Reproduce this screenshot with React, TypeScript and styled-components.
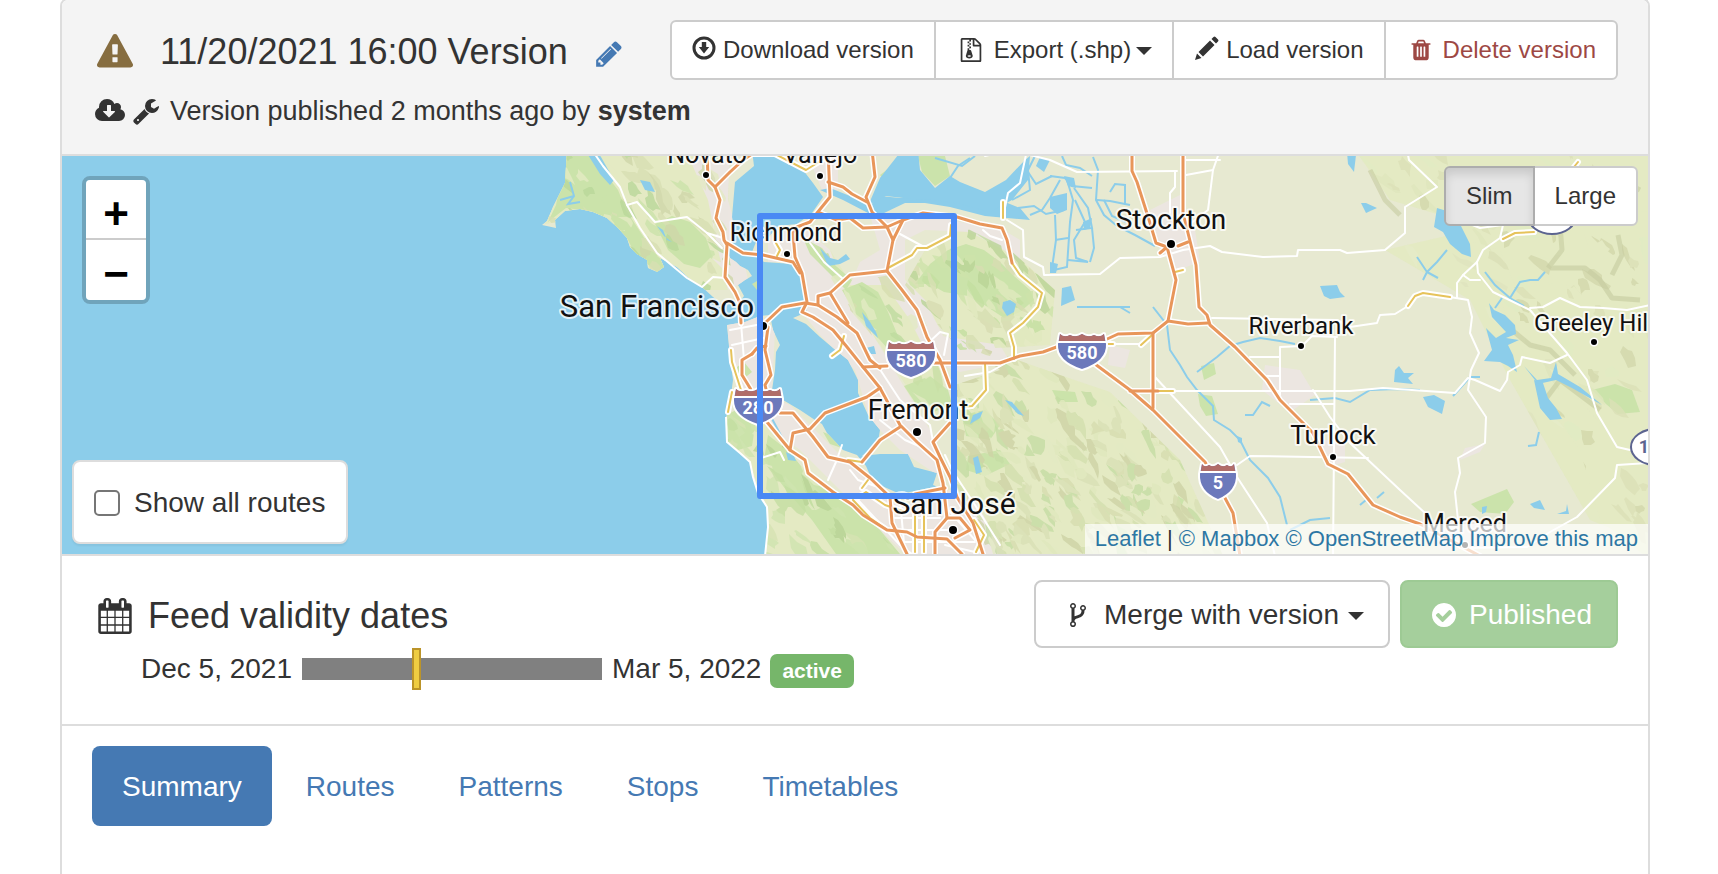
import React, { useState } from 'react';
import styled, { createGlobalStyle, css } from 'styled-components';

const color = {
  text: '#333333',
  link: '#4579b3',
  danger: '#9d4844',
  warning: '#866d40',
  success: '#76b66a',
  border: '#dddddd',
  control: '#cccccc',
  water: '#8ccdea',
  land: '#e7e9d1',
  hill: '#e4eac4',
  urban: '#ece6e1',
  wood: '#cbe3ab',
  motorway: '#e8965a',
  trunk: '#e6c35b',
};

const GlobalStyle = createGlobalStyle`
  *, *::before, *::after { box-sizing: border-box; }
  body {
    margin: 0;
    background: #ffffff;
    color: ${color.text};
    font-family: "Liberation Sans", Helvetica, Arial, sans-serif;
    font-size: 28px;
    line-height: 40px;
  }
`;

/* ---------- icons ---------- */

type IconName =
  | 'warning' | 'pencil' | 'cloud' | 'wrench' | 'archive'
  | 'trash' | 'calendar' | 'fork' | 'check';

const iconPaths: Record<IconName, string> = {
  warning:
    'M1024 1375v-190q0-14-9.5-23.5t-22.5-9.5h-192q-13 0-22.5 9.5t-9.5 23.5v190q0 14 9.5 23.5t22.5 9.5h192q13 0 22.5-9.5t9.5-23.5zm-2-374l18-459q0-12-10-19-13-11-24-11h-220q-11 0-24 11-10 7-10 21l17 457q0 10 10 16.5t24 6.5h185q14 0 23.5-6.5t10.5-16.5zm-14-934l768 1408q35 63-2 126-17 29-46.5 46t-63.5 17h-1536q-34 0-63.5-17t-46.5-46q-37-63-2-126l768-1408q17-31 47-49t65-18 65 18 47 49z',
  pencil:
    'M491 1536l91-91-235-235-91 91v107h128v128h107zm523-928q0-22-22-22-10 0-17 7l-542 542q-7 7-7 17 0 22 22 22 10 0 17-7l542-542q7-7 7-17zm-54-192l416 416-832 832h-416v-416zm683 96q0 53-37 90l-166 166-416-416 166-165q36-38 90-38 53 0 91 38l235 234q37 39 37 91z',
  cloud:
    'M1216 928q0-14-9-23t-23-9h-224v-352q0-13-9.5-22.5t-22.5-9.5h-192q-13 0-22.5 9.5t-9.5 22.5v352h-224q-13 0-22.5 9.5t-9.5 22.5q0 14 9 23l352 352q9 9 23 9t23-9l351-351q10-12 10-24zm640 224q0 159-112.5 271.5t-271.5 112.5h-1088q-185 0-316.5-131.5t-131.5-316.5q0-130 70-240t188-165q-2-30-2-43 0-212 150-362t362-150q156 0 285.5 87t188.5 231q71-62 166-62 106 0 181 75t75 181q0 76-41 138 130 31 213.5 135.5t83.5 238.5z',
  wrench:
    'M448 1472q0-26-19-45t-45-19-45 19-19 45 19 45 45 19 45-19 19-45zm644-420l-682 682q-37 37-90 37-52 0-91-37l-106-108q-38-36-38-90 0-53 38-91l681-681q39 98 114.5 173.5t173.5 114.5zm634-435q0 39-23 106-47 134-164.5 217.5t-258.5 83.5q-185 0-316.5-131.5t-131.5-316.5 131.5-316.5 316.5-131.5q58 0 121.5 16.5t107.5 46.5q16 11 16 28t-16 28l-293 169v224l193 107q5-3 79-48.5t135.5-81 70.5-35.5q15 0 23.5 10t8.5 25z',
  archive:
    'M768 384v-128h-128v128h128zm128 128v-128h-128v128h128zm-128 128v-128h-128v128h128zm128 128v-128h-128v128h128zm700-388q28 28 48 76t20 88v1152q0 40-28 68t-68 28h-1344q-40 0-68-28t-28-68v-1600q0-40 28-68t68-28h896q40 0 88 20t76 48zm-444-244v376h376q-10-29-22-41l-313-313q-12-12-41-22zm384 1528v-1024h-416q-40 0-68-28t-28-68v-416h-128v128h-128v-128h-512v1536h1280zm-627-721l107 349q8 27 8 52 0 83-72.5 137.5t-183.5 54.5-183.5-54.5-72.5-137.5q0-25 8-52 21-63 120-396v-128h128v128h79q22 0 39 13t23 34zm-141 465q53 0 90.5-19t37.5-45-37.5-45-90.5-19-90.5 19-37.5 45 37.5 45 90.5 19z',
  trash:
    'M704 1376v-704q0-14-9-23t-23-9h-64q-14 0-23 9t-9 23v704q0 14 9 23t23 9h64q14 0 23-9t9-23zm256 0v-704q0-14-9-23t-23-9h-64q-14 0-23 9t-9 23v704q0 14 9 23t23 9h64q14 0 23-9t9-23zm256 0v-704q0-14-9-23t-23-9h-64q-14 0-23 9t-9 23v704q0 14 9 23t23 9h64q14 0 23-9t9-23zm-544-992h448l-48-117q-7-9-17-11h-317q-10 2-17 11zm928 32v64q0 14-9 23t-23 9h-96v948q0 83-47 143.5t-113 60.5h-832q-66 0-113-58.5t-47-141.5v-952h-96q-14 0-23-9t-9-23v-64q0-14 9-23t23-9h309l70-167q15-37 54-63t79-26h320q40 0 79 26t54 63l70 167h309q14 0 23 9t9 23z',
  calendar:
    'M192 1664h288v-288h-288v288zm352 0h320v-288h-320v288zm-352-352h288v-320h-288v320zm352 0h320v-320h-320v320zm-352-384h288v-288h-288v288zm736 736h320v-288h-320v288zm-384-736h320v-288h-320v288zm768 736h288v-288h-288v288zm-384-352h320v-320h-320v320zm-352-864v-288q0-13-9.5-22.5t-22.5-9.5h-64q-13 0-22.5 9.5t-9.5 22.5v288q0 13 9.5 22.5t22.5 9.5h64q13 0 22.5-9.5t9.5-22.5zm736 864h288v-320h-288v320zm-384-384h320v-288h-320v288zm384 0h288v-288h-288v288zm32-480v-288q0-13-9.5-22.5t-22.5-9.5h-64q-13 0-22.5 9.5t-9.5 22.5v288q0 13 9.5 22.5t22.5 9.5h64q13 0 22.5-9.5t9.5-22.5zm384-64v1280q0 52-38 90t-90 38h-1408q-52 0-90-38t-38-90v-1280q0-52 38-90t90-38h128v-96q0-66 47-113t113-47h64q66 0 113 47t47 113v96h384v-96q0-66 47-113t113-47h64q66 0 113 47t47 113v96h128q52 0 90 38t38 90z',
  fork:
    'M672 1472q0-40-28-68t-68-28-68 28-28 68 28 68 68 28 68-28 28-68zm0-1152q0-40-28-68t-68-28-68 28-28 68 28 68 68 28 68-28 28-68zm640 128q0-40-28-68t-68-28-68 28-28 68 28 68 68 28 68-28 28-68zm96 0q0 52-26 96.5t-70 69.5q-2 287-226 414-67 38-203 81-128 40-169.5 71t-41.5 100v26q44 25 70 69.5t26 96.5q0 80-56 136t-136 56-136-56-56-136q0-52 26-96.5t70-69.5v-820q-44-25-70-69.5t-26-96.5q0-80 56-136t136-56 136 56 56 136q0 52-26 96.5t-70 69.5v497q54-26 154-57 55-17 87.5-29.5t70.5-31 59-39.5 40.5-51 28-69.5 8.5-91.5q-44-25-70-69.5t-26-96.5q0-80 56-136t136-56 136 56 56 136z',
  check:
    'M1412 734q0-28-18-46l-91-90q-19-19-45-19t-45 19l-408 407-226-226q-19-19-45-19t-45 19l-91 90q-18 18-18 46 0 27 18 45l362 362q19 19 45 19 27 0 46-19l543-543q18-18 18-45zm252 162q0 209-103 385.5t-279.5 279.5-385.5 103-385.5-103-279.5-279.5-103-385.5 103-385.5 279.5-279.5 385.5-103 385.5 103 279.5 279.5 103 385.5z',
};

const Svg = styled.svg`
  display: block;
  flex: none;
  fill: currentColor;
`;

const RaisedSvg = styled(Svg)`
  margin-bottom: 4px;
`;

function Icon({ name, size, width = size }: { name: IconName; size: number; width?: number }) {
  const box = name === 'cloud' ? '-64 0 1920 1792' : '0 0 1792 1792';
  return (
    <Svg width={width} height={size} viewBox={box} aria-hidden="true">
      <path d={iconPaths[name]} />
    </Svg>
  );
}

function DownloadIcon() {
  return (
    <RaisedSvg width="24" height="24" viewBox="0 0 24 24" aria-hidden="true">
      <circle cx="12" cy="12" r="10" fill="none" stroke="currentColor" strokeWidth="3" />
      <path d="M9.8 6h4.4v5h3L12 17.500l-5.200-6.500h3z" />
    </RaisedSvg>
  );
}

function SolidPencilIcon() {
  return (
    <RaisedSvg width="25" height="24" viewBox="0 0 25 24" aria-hidden="true">
      <path d="M1 24l2-6.500 4.500 4.500zM4.500 16L16 4.500l4.500 4.500L9 20.500zM17.500 3l2-2q1-1 2 0l2.500 2.500q1 1 0 2l-2 2z" />
    </RaisedSvg>
  );
}

/* ---------- map drawing ---------- */

type Points = string;

const marinCoast: Points =
  '567,150 565,183 553,207 547,221 542,225 556,228 555,220 565,211 580,209 593,212 607,218 618,228 627,238 630,247 637,254 647,260 648,268 657,272 664,267 660,258 677,267 690,279 702,287 713,297 722,304 738,304 744,296 738,285 745,280 752,276 748,270 740,266 736,262 730,258 725,247 735,240 732,217 735,182 754,166 752,150';

const peninsula: Points =
  '727,325 745,322 760,316 770,315 773,330 780,345 776,352 775,370 772,390 783,400 800,410 815,420 822,424 827,433 843,450 857,455 866,466 873,482 900,494 945,485 960,480 1000,560 765,560 768,527 767,507 758,493 753,477 750,462 740,453 727,442 726,417 729,410 733,380 730,357';

const eastShore: Points =
  '777,150 803,170 813,183 823,197 812,213 797,224 778,226 768,238 756,242 752,252 764,262 793,264 800,275 805,300 807,312 793,318 806,324 820,337 833,348 848,360 858,380 858,393 868,415 880,430 878,442 862,456 880,454 908,454 914,467 937,473 933,485 945,490 990,560 1650,560 1650,150';

const waters: Points[] = [
  '820,190 843,200 868,213 882,214 905,203 925,203 950,207 985,216 1030,220 1020,208 1000,200 978,205 950,196 920,196 900,198 880,196 872,204 850,196 830,188',
  '902,150 918,150 920,170 935,188 950,176 960,182 985,192 1006,180 1025,160 1030,156 1028,180 1012,200 990,212 960,204 935,200 912,199 886,196 868,206 880,178',
  '585,150 597,150 614,180 610,185 600,174',
  '1050,197 1067,193 1067,210 1057,214 1050,208',
  '1062,288 1071,286 1075,300 1061,306',
  '1040,157 1050,160 1044,172 1036,166',
  '1437,208 1450,212 1460,224 1470,244 1471,257 1462,254 1450,244 1443,232 1434,227',
  '1489,303 1494,310 1505,315 1515,325 1516,334 1506,338 1519,340 1508,345 1513,355 1517,372 1508,366 1500,362 1484,361 1492,350 1486,328 1496,338 1506,332 1492,317',
  '1534,380 1543,383 1548,398 1556,408 1562,419 1550,420 1540,408',
  '1524,366 1537,380 1551,378 1556,362 1558,374 1580,387 1602,405 1572,388 1556,380 1538,384',
  '1395,370 1399,366 1404,373 1414,373 1408,378 1413,384 1394,382',
  '1423,397 1434,395 1445,401 1442,414 1428,407',
  '1320,286 1337,285 1340,292 1345,297 1330,299 1324,296',
  '1361,203 1366,203 1377,208 1366,213',
  '1347,152 1356,155 1354,172 1348,164',
  '1530,504 1540,500 1545,510 1534,508',
  '1557,514 1566,511 1567,504 1569,514',
  '1482,507 1487,506 1486,512 1482,514',
  '820,248 830,258 838,260 846,254 850,259 840,264 828,266',
  '862,312 870,322 876,332 878,338 866,326',
  '866,348 874,346 876,354 868,354',
  '1003,302 1010,300 1016,304 1014,312 1007,316 1002,308',
  '1005,400 1012,402 1024,416 1018,414',
  '973,415 983,411 980,418 970,424',
  '973,458 978,456 982,472 976,474',
  '640,180 650,182 655,192 645,190',
  '657,226 663,230 667,240 672,242 664,236',
  '786,452 794,456 796,461 788,460',
  '1237,436 1242,438 1242,444 1238,442',
  '1050,262 1058,264 1056,273 1050,273',
  '1083,222 1092,218 1090,228 1084,230',
  '1064,176 1074,178 1076,188 1068,186',
];

const channels: Points[] = [
  '1093,157 1098,170 1096,200 1104,215 1117,226 1135,235 1155,246',
  '1067,180 1073,200 1070,222 1067,267 1054,270',
  '1050,176 1065,178 1072,186 1092,188',
  '1075,200 1085,222 1074,240 1076,258 1088,262 1068,260',
  '1074,188 1088,208 1092,228 1076,230',
  '1097,200 1110,201 1130,205',
  '1125,205 1125,185 1115,184 1110,192',
  '1062,156 1066,165 1080,168 1092,176',
  '1012,200 1030,190 1028,170 1035,156',
  '1030,215 1042,210 1050,198 1060,180',
  '1018,208 1034,206 1046,214 1064,210',
  '1028,172 1036,184 1052,176',
  '1055,215 1056,240 1052,268',
  '1055,240 1068,238',
  '1092,228 1094,248 1090,262',
  '1104,200 1112,216 1126,222',
  '950,178 958,166 970,158',
  '935,158 962,166 975,156',
  '1077,307 1130,307',
  '1120,307 1130,313',
  '1153,307 1167,325 1170,350 1180,365 1187,377 1197,390 1213,406 1214,420 1230,430 1240,440 1250,460 1268,478 1280,497 1287,525',
  '1197,372 1217,357 1230,346 1243,342 1260,338 1280,341 1295,344',
  '1245,415 1253,415 1262,402 1270,406',
  '1310,400 1335,398 1350,402 1370,390 1395,389 1420,390',
  '1453,396 1470,377 1480,377',
  '1417,257 1427,272 1423,280',
  '1427,272 1438,278',
  '1427,272 1437,262 1447,250',
  '1485,272 1495,285 1510,298 1524,306',
  '1510,298 1520,282 1530,280 1538,280 1545,272',
  '1495,308 1502,298',
  '1528,446 1536,445 1539,432',
  '570,182 574,196 568,204 580,202',
  '574,196 560,200',
  '770,415 778,430 786,445',
  '1290,530 1310,520 1330,518',
  '1377,498 1384,492',
  '1360,505 1366,500',
];

const urbanAreas: Points[] = [
  '727,325 760,316 775,330 772,390 740,392 730,360',
  '735,384 790,405 840,455 880,490 905,505 950,490 985,554 905,554 880,530 840,490 800,450 760,420',
  '768,238 800,225 830,250 845,290 870,330 900,380 930,430 945,480 930,470 900,450 870,420 855,370 820,335 800,310 804,285 792,262 768,262',
  '870,215 925,214 960,222 1000,228 1020,240 1020,262 1004,250 970,232 925,230 905,240 905,280 925,300 950,350 935,370 910,320 885,285 850,285 860,262 880,250',
  '935,335 1000,345 1010,362 960,372 940,365',
  '1150,210 1180,195 1195,230 1200,262 1178,270 1160,250',
  '1265,365 1300,370 1315,395 1290,412 1262,390',
  '1110,345 1130,350 1125,368 1108,365',
  '1322,440 1345,440 1345,462 1325,468',
  '1420,520 1475,520 1490,548 1440,550',
  '690,160 730,156 728,200 742,250 748,280 728,290 718,250 708,200',
  '808,156 838,156 838,190 822,190',
  '950,490 975,500 1005,554 960,554',
  '1465,448 1485,444 1480,452 1460,460',
];

const woods: Points[] = [
  '567,150 586,150 604,172 618,190 626,210 652,250 660,258 664,267 657,272 645,262 635,254 628,240 607,218 590,211 566,208 548,222 556,205',
  '655,224 672,216 690,222 706,238 712,256 700,268 684,264 668,250',
  '803,238 822,248 836,266 852,280 846,290 828,272 810,254',
  '842,290 862,282 878,292 888,312 898,336 912,352 896,358 880,340 858,318',
  '915,284 930,264 948,250 966,244 984,250 1000,262 1014,276 1030,290 1034,300 1020,312 1004,318 986,306 968,296 944,292 930,284',
  '904,386 930,376 948,390 952,404 934,412 916,404',
  '1052,390 1075,392 1078,402 1058,402',
  '1201,366 1214,363 1216,374 1204,380',
  '1198,394 1212,396 1218,414 1206,416 1200,406',
  '1471,504 1507,489 1514,502 1505,514 1480,512',
  '730,372 744,362 752,372 742,380',
  '727,415 745,405 756,420 752,446 738,450 728,440',
  '768,435 790,452 804,470 820,486 850,505 880,530 900,554 836,554 812,520 786,490 764,460',
  '918,156 945,156 950,176 935,186 922,172',
  '880,175 900,160 905,170 888,184',
  '962,415 985,410 1000,425 990,440 966,436',
  '968,456 1000,450 1010,464 985,476 966,470',
  '1592,390 1615,384 1632,390 1640,412 1618,414 1606,404',
  '1178,496 1184,500 1180,510 1176,506',
  '823,432 838,438 842,448 830,444',
];

const ridges: Points[] = [
  '1550,268 1585,268 1600,280 1612,298 1640,300',
  '1618,235 1622,255 1612,275',
  '1560,225 1562,250 1548,268',
  '1500,320 1530,345 1550,350 1575,375',
  '1545,400 1560,380 1600,410',
  '1370,170 1385,200 1400,215',
  '1565,180 1600,170 1640,190',
];

const motorways: Points[] = [
  '707,150 708,180 715,187 720,200 716,218 723,232 724,240 727,245 725,277 735,292 740,303 741,323',
  '715,187 730,172 743,160 752,154',
  '727,243 743,253 763,255 793,262 800,273',
  '828,150 830,197 817,213 810,222 797,227 793,233 795,257 802,273 807,302 802,312 813,317 833,330 847,347 863,367 880,388 900,425 917,442 937,460 943,483 947,518',
  '872,150 875,177 866,197 872,212 887,227 893,240 887,271 902,290 917,310 927,337 940,360 950,387',
  '828,182 843,187 852,194 867,202',
  '820,213 837,220 850,218 863,228 887,227 903,220 923,213 957,217 980,224 1002,228 1007,240 1012,263',
  '903,220 893,240',
  '818,305 818,296 830,293 850,275 887,271',
  '765,323 782,307 805,303 818,305 837,317 857,333 870,360 880,368',
  '830,293 848,323',
  '752,354 742,360 742,375 750,388 767,422 790,450 805,460 808,473 833,492 853,505 863,515 887,530 907,532 917,537 947,539 962,554',
  '768,327 765,350 771,375 765,385 770,405 780,413 793,413 813,437 828,457 850,462 870,478 890,497 892,523 907,554',
  '752,354 757,348 766,346',
  '790,450 793,433 810,429 825,413 867,397 880,388',
  '862,462 880,440 900,427',
  '863,367 887,366',
  '934,363 1000,363 1020,356 1043,352 1062,345',
  '915,494 945,488',
  '950,423 933,442 940,457 950,477 957,497 973,523 983,554',
  '935,554 935,532 947,518 960,518 970,530 955,538',
  '1132,150 1132,171 1137,182 1150,223 1156,243 1167,247 1176,280 1168,321 1153,333 1118,334 1105,340',
  '1183,150 1183,213 1196,265 1199,307 1207,315 1210,325 1235,347 1267,380 1280,400 1313,433 1328,464 1348,474 1373,505 1400,517 1420,524 1480,556',
  '1168,321 1188,324 1208,323',
  '1153,333 1153,408',
  '1095,364 1130,390 1153,410 1205,462 1225,498 1233,513 1240,556',
  '1130,391 1158,391',
  '1160,253 1167,247',
  '1178,246 1188,242',
];

const trunks: Points[] = [
  '1003,202 1003,218',
  '1012,263 1020,275 1042,293 1038,307 1023,323 1010,333 1014,347 1014,359',
  '888,268 912,255 917,248 927,248 950,236 951,225',
  '985,363 986,390 972,406 962,407',
  '745,154 775,154 806,170 822,160',
  '776,243 780,250 777,256',
  '844,336 840,350 832,356',
  '731,350 732,362 741,390',
  '732,392 728,412',
  '857,498 866,492 885,505 905,512',
  '853,500 870,518 887,530',
  '915,514 915,552',
  '924,510 924,552',
  '862,488 868,480',
  '848,460 862,462',
  '974,520 984,535 976,552',
  '1158,391 1173,391',
  '1141,345 1152,335',
  '1107,344 1113,344',
  '1175,272 1183,270',
  '1408,306 1415,296 1423,293 1450,297',
  '1503,239 1515,233 1534,232',
  '1570,172 1578,162',
];

const streets: Points[] = [
  '592,150 603,166 620,187 627,205 640,228 657,253 687,278 702,287 713,277 725,278',
  '627,205 637,202 655,222 687,217 707,233 723,238',
  '707,233 722,248',
  '985,156 1010,150 1050,160 1077,172 1177,171',
  '1175,172 1175,187 1170,193 1170,213',
  '1183,160 1220,160',
  '1220,150 1213,170 1208,210 1190,224',
  '1027,150 1020,183 1008,193 1003,217',
  '1007,220 1023,230 1024,257 1043,267 1044,275 1100,274 1120,258 1160,257 1183,250 1210,246 1222,252 1263,257 1297,256 1298,250 1340,250 1347,253 1385,250 1405,233 1405,207 1437,187 1409,160 1407,150',
  '983,230 990,236 1002,240',
  '1212,318 1337,320 1350,327 1377,323 1380,315 1395,314 1408,306',
  '1450,297 1468,300 1472,317 1470,333 1479,353 1471,370 1468,390 1486,417 1485,443 1458,458 1460,473 1455,492 1458,520',
  '1173,391 1350,391 1383,388 1455,393 1468,378 1475,380 1500,391 1507,380 1508,372 1520,365 1522,357 1550,363 1567,355',
  '1457,298 1457,283 1463,275 1477,262 1483,250 1500,238 1503,225 1480,228 1465,222',
  '1463,275 1470,280 1480,280',
  '1477,262 1478,273 1493,292 1530,310 1547,330 1567,353 1587,380 1597,413 1617,447 1630,450',
  '1530,308 1543,307 1560,298 1580,307 1603,308 1627,310 1650,305',
  '1650,463 1617,465 1615,478 1577,517 1550,532 1527,547 1460,548',
  '1155,377 1220,447 1237,477 1267,523 1275,556',
  '1237,465 1250,456 1368,458',
  '1335,337 1333,556',
  '1280,395 1280,347 1302,346 1312,336 1337,337',
  '1250,357 1280,357',
  '1266,376 1280,376',
  '1290,404 1334,404',
  '1313,390 1330,417 1350,443 1400,490 1425,513',
  '1113,344 1141,344',
  '1186,175 1213,170',
  '965,376 990,372 1004,364',
  '761,458 780,452 784,460',
  '810,243 824,262 842,278',
  '900,234 926,248',
  '730,330 762,324',
  '732,345 764,338',
  '741,323 744,360',
  '864,345 900,400 930,425 933,442',
  '880,420 905,440 928,450',
  '850,470 858,480 875,486',
  '828,480 836,462 842,445',
  '858,500 900,545 912,554',
  '900,500 905,554',
  '945,545 975,552',
  '893,530 950,530',
  '893,518 940,518',
  '900,542 975,542',
  '937,497 975,540',
  '945,455 952,470 975,505 1000,545',
  '926,345 940,332 948,334 944,355',
];

const hillRegions: { id: string; outline: Points; box: [number, number, number, number]; count: number; tints: string[] }[] = [
  { id: 'diablo', outline: '960,340 1060,375 1110,392 1180,460 1225,560 985,560 955,480 955,385 1000,370', box: [950, 340, 275, 220], count: 360, tints: ['#d6ddb0', '#d3dfae', '#cdd3a5', '#dfe8bd', '#c5dda4', '#e3eac4', '#d9e0b6'] },
  { id: 'mount', outline: '905,285 925,250 960,225 1010,250 1055,290 1050,345 960,350 925,310', box: [900, 225, 155, 125], count: 110, tints: ['#c3dfa0', '#cde3ab', '#d6dfb2', '#e0e9bf', '#b9d496', '#d8dcb2'] },
  { id: 'sierra', outline: '1355,150 1650,150 1650,560 1600,520 1580,450 1545,400 1520,345 1500,300 1440,215 1390,200', box: [1355, 150, 295, 380], count: 190, tints: ['#dbe0b7', '#e4eac4', '#d2d7ac', '#dfe6bd', '#e1ecc4'] },
  { id: 'foothills', outline: '1385,250 1450,235 1500,250 1530,320 1580,400 1640,470 1640,540 1590,520 1510,380 1470,300', box: [1385, 235, 250, 290], count: 36, tints: ['#dfe4bf', '#e5ebc8'] },
  { id: 'eastbay', outline: '808,238 830,250 850,282 890,275 920,310 935,345 948,400 938,420 905,384 880,345 850,310 826,270', box: [808, 238, 140, 180], count: 70, tints: ['#d6deb0', '#bfdb9f', '#e3eac4', '#c8dfa6'] },
  { id: 'marin', outline: '567,150 730,150 727,245 735,290 705,290 648,268 600,215 545,224', box: [545, 150, 190, 145], count: 90, tints: ['#d8dfb3', '#cbe3ab', '#b9d79a', '#e4eac4', '#cfd6a9'] },
  { id: 'santacruz', outline: '727,410 760,420 800,465 850,502 905,560 762,560 768,510 750,465 727,445', box: [727, 405, 180, 155], count: 120, tints: ['#c3dea2', '#d6e3b3', '#cfe4b0', '#e3eac4', '#b8d396'] },
];

/* Small deterministic generator, so the relief is the same on every render. */
function relief([x, y, w, h]: [number, number, number, number], count: number, tints: string[], seed: number) {
  let state = seed;
  const next = () => {
    state = (state * 16807) % 2147483647;
    return state / 2147483647;
  };
  return Array.from({ length: count }, () => {
    const cx = x + next() * w;
    const cy = y + next() * h;
    const along = 5 + next() * 12;
    const across = 2 + next() * 5;
    const tilt = 0.5 + next() * 0.8;
    const corners = Array.from({ length: 9 }, (_, i) => {
      const a = (i / 9) * Math.PI * 2;
      const r = 0.5 + next() * 0.8;
      const px = Math.cos(a) * along * r;
      const py = Math.sin(a) * across * r;
      return `${Math.round(cx + px * Math.cos(tilt) - py * Math.sin(tilt))},${Math.round(cy + px * Math.sin(tilt) + py * Math.cos(tilt))}`;
    });
    return { points: corners.join(' '), fill: tints[Math.floor(next() * tints.length)] };
  });
}

const reliefLayers = hillRegions.map((region, i) => ({
  ...region,
  patches: relief(region.box, region.count, region.tints, 4177 + i * 911),
}));

const places = [
  { name: 'Novato', x: 707, y: 163, size: 25, dot: [706, 175, 3] },
  { name: 'Vallejo', x: 820, y: 163, size: 25, dot: [820, 176, 3] },
  { name: 'Richmond', x: 786, y: 241, size: 25, dot: [787, 254, 3] },
  { name: 'San Francisco', x: 657, y: 317, size: 31, dot: [763, 326, 4] },
  { name: 'Fremont', x: 918, y: 419, size: 27, dot: [917, 432, 4] },
  { name: 'San José', x: 954, y: 514, size: 30, dot: [953, 530, 4] },
  { name: 'Stockton', x: 1171, y: 229, size: 28, dot: [1171, 244, 4] },
  { name: 'Riverbank', x: 1301, y: 334, size: 24, dot: [1301, 346, 3] },
  { name: 'Turlock', x: 1333, y: 444, size: 26, dot: [1333, 457, 3] },
  { name: 'Greeley Hil', x: 1591, y: 331, size: 24, dot: [1594, 342, 3] },
  { name: 'Merced', x: 1465, y: 532, size: 25, dot: [1465, 545, 3] },
];

const shields = [
  { label: '580', x: 911, y: 341, half: 24 },
  { label: '280', x: 758, y: 388, half: 24 },
  { label: '580', x: 1082, y: 333, half: 24 },
  { label: '5', x: 1218, y: 463, half: 18 },
];

const MapSvg = styled.svg`
  display: block;
  width: 100%;
  height: 100%;
`;

const PlaceLabel = styled.text`
  font-family: Roboto, "Noto Sans", sans-serif;
  text-anchor: middle;
  fill: #111111;
  stroke: rgba(255, 255, 255, 0.75);
  stroke-width: 4px;
  stroke-linejoin: round;
  paint-order: stroke;
`;

const ShieldLabel = styled.text<{ $dark?: boolean }>`
  font-family: Roboto, "Noto Sans", sans-serif;
  font-size: 18px;
  font-weight: 700;
  text-anchor: middle;
  fill: ${(p) => (p.$dark ? '#5c6490' : '#ffffff')};
`;

function Shield({ label, x, y, half }: { label: string; x: number; y: number; half: number }) {
  const l = x - half;
  const r = x + half;
  const crown = `M${l + 2} ${y + 1}Q${x - half * 0.75} ${y + 5} ${x - half / 2} ${y + 2}Q${x - half / 4} ${y + 5} ${x} ${y + 1}Q${x + half / 4} ${y + 5} ${x + half / 2} ${y + 2}Q${x + half * 0.75} ${y + 5} ${r - 2} ${y + 1}`;
  const body = `L${r} ${y + 11}Q${r + 1} ${y + 28} ${x} ${y + 36}Q${l - 1} ${y + 28} ${l} ${y + 11}Z`;
  return (
    <g>
      <path d={crown + body} fill="#6c79bb" stroke="#ffffff" strokeWidth="4" strokeLinejoin="round" />
      <path d={crown + body} fill="#6c79bb" />
      <path d={`${crown}L${r - 1} ${y + 8}H${l + 1}Z`} fill="#b16d69" />
      <path d={`M${l} ${y + 9}H${r}`} stroke="#ffffff" strokeWidth="2" />
      <ShieldLabel x={x} y={y + 26}>{label}</ShieldLabel>
    </g>
  );
}

function BayAreaMap() {
  return (
    <MapSvg viewBox="62 156 1586 398" preserveAspectRatio="xMidYMid slice" role="img" aria-label="Map of the feed area">
      <defs>
        {hillRegions.map((r) => (
          <clipPath id={r.id} key={r.id}><polygon points={r.outline} /></clipPath>
        ))}
        <clipPath id="land">
          <polygon points={marinCoast} />
          <polygon points={peninsula} />
          <polygon points={eastShore} />
        </clipPath>
      </defs>
      <rect x="-1000" y="-1000" width="4000" height="3000" fill={color.water} />
      <g clipPath="url(#land)">
        <rect x="540" y="150" width="1110" height="410" fill={color.land} />
        {hillRegions.map((r) => <polygon key={r.id} points={r.outline} fill={color.hill} />)}
        {urbanAreas.map((p) => <polygon key={p} points={p} fill={color.urban} />)}
        {woods.map((p) => <polygon key={p} points={p} fill={color.wood} />)}
        {reliefLayers.map((r) => (
          <g key={r.id} clipPath={`url(#${r.id})`} opacity="0.8">
            {r.patches.map((p, i) => <polygon key={i} points={p.points} fill={p.fill} />)}
          </g>
        ))}
        <g fill="none" stroke="#c6cca0" strokeWidth="5" strokeLinejoin="bevel" opacity="0.6">
          {ridges.map((p) => <polyline key={p} points={p} />)}
        </g>
      </g>
      <polygon points="712,258 720,262 732,266 740,272 736,280 726,272" fill={color.urban} />
      <polygon points="752,284 757,281 757,290" fill={color.wood} />
      {waters.map((p) => <polygon key={p} points={p} fill={color.water} />)}
      <g fill="none" stroke={color.water} strokeWidth="2">
        {channels.map((p) => <polyline key={p} points={p} />)}
      </g>
      <polyline points="726,417 727,442 740,453 750,462 753,477 758,493 767,507 768,527 765,556" fill="none" stroke="#ffffff" strokeWidth="2" />
      <g fill="none" strokeLinejoin="round" strokeLinecap="round">
        <g stroke="#ffffff" strokeWidth="2">
          {streets.map((p) => <polyline key={p} points={p} />)}
        </g>
        <g stroke="#ffffff" strokeWidth="6">
          {trunks.map((p) => <polyline key={p} points={p} />)}
          {motorways.map((p) => <polyline key={p} points={p} />)}
        </g>
        <g stroke={color.trunk} strokeWidth="2">
          {trunks.map((p) => <polyline key={p} points={p} />)}
        </g>
        <g stroke={color.motorway} strokeWidth="3">
          {motorways.map((p) => <polyline key={p} points={p} />)}
        </g>
      </g>
      <ellipse cx="1552" cy="216" rx="24" ry="18" fill="#ffffff" stroke="#5c6490" strokeWidth="2" />
      <ellipse cx="1656" cy="447" rx="25" ry="18" fill="#ffffff" stroke="#5c6490" strokeWidth="2" />
      <ShieldLabel $dark x="1644" y="453">1</ShieldLabel>
      {shields.map((s) => <Shield key={`${s.label}-${s.x}`} {...s} />)}
      {places.map((p) => (
        <g key={p.name}>
          <circle cx={p.dot[0]} cy={p.dot[1]} r={p.dot[2]} stroke="#ffffff" strokeWidth="3" paintOrder="stroke" />
          <PlaceLabel x={p.x} y={p.y} fontSize={p.size}>{p.name}</PlaceLabel>
        </g>
      ))}
      <rect x="760" y="216" width="194" height="280" fill="none" stroke="#4a89f4" strokeWidth="6" strokeLinejoin="round" />
    </MapSvg>
  );
}

/* ---------- page ---------- */

const Panel = styled.main`
  margin: -2px 68px 0 60px;
  min-height: calc(100vh + 2px);
  border: 2px solid ${color.border};
  border-bottom: 0;
  border-radius: 8px 8px 0 0;
  background: #ffffff;
`;

const Header = styled.header`
  display: flex;
  justify-content: space-between;
  align-items: flex-start;
  padding: 20px 30px 22px;
  height: 154px;
  background: #f4f4f4;
  border-radius: 6px 6px 0 0;
`;

const Titles = styled.div`
  display: flex;
  flex: 1;
  flex-direction: column;
  gap: 19px;
  min-width: 0;
  padding-top: 12px;
`;

const TitleRow = styled.div`
  display: flex;
  align-items: center;
`;

const Heading = styled.h1`
  margin: 0 26px 0 22px;
  font-size: 36px;
  font-weight: 400;
  line-height: 40px;
  white-space: nowrap;
`;

const IconSlot = styled.span<{ $width: number; $tone?: string }>`
  display: flex;
  justify-content: center;
  flex: none;
  width: ${(p) => p.$width}px;
  color: ${(p) => p.$tone ?? 'inherit'};
`;

const EditButton = styled.button`
  display: flex;
  margin: 0;
  padding: 4px 0 0;
  border: 0;
  background: none;
  color: ${color.link};
  cursor: pointer;
`;

const Byline = styled.p`
  display: flex;
  align-items: center;
  gap: 7px;
  margin: 0;
  padding-left: 3px;
  font-size: 27px;
`;

const BylineText = styled.span`
  padding-left: 3px;
  white-space: nowrap;
`;

const ButtonGroup = styled.div`
  display: flex;
  flex: none;
`;

const buttonBase = css`
  display: flex;
  align-items: center;
  margin: 0;
  border: 2px solid ${color.control};
  background: #ffffff;
  color: ${color.text};
  font-family: inherit;
  white-space: nowrap;
  cursor: pointer;
`;

const GroupButton = styled.button<{ $active?: boolean; $tone?: string }>`
  ${buttonBase}
  gap: 7px;
  height: 60px;
  padding: 0 20px;
  font-size: 24px;
  line-height: 36px;
  color: ${(p) => p.$tone ?? color.text};
  & + & { margin-left: -2px; }
  &:first-child { border-radius: 6px 0 0 6px; }
  &:last-child { border-radius: 0 6px 6px 0; }
  ${(p) => p.$active && css`
    position: relative;
    border-color: #adadad;
    background: #e6e6e6;
    box-shadow: inset 0 6px 10px rgba(0, 0, 0, 0.125);
  `}
`;

const Caret = styled.span<{ $gap: number }>`
  width: 16px;
  height: 8px;
  margin: 2px 0 0 ${(p) => p.$gap}px;
  border: 8px solid transparent;
  border-top-color: currentColor;
  border-bottom: 0;
`;

const MapFrame = styled.section`
  position: relative;
  height: 402px;
  border-top: 2px solid ${color.border};
  border-bottom: 2px solid ${color.border};
  overflow: hidden;
`;

const ZoomControl = styled.div`
  position: absolute;
  top: 20px;
  left: 20px;
  display: flex;
  flex-direction: column;
  width: 68px;
  border: 4px solid rgba(0, 0, 0, 0.2);
  border-radius: 8px;
`;

const ZoomButton = styled.button`
  height: 60px;
  margin: 0;
  padding: 8px 0 0;
  border: 0;
  background: #ffffff;
  background-clip: padding-box;
  color: #000000;
  font: bold 44px/52px "Liberation Sans", Arial, sans-serif;
  cursor: pointer;
  &:first-child { border-bottom: 2px solid ${color.control}; border-radius: 4px 4px 0 0; }
  &:last-child { border-radius: 0 0 4px 4px; }
`;

const SizeToggle = styled(ButtonGroup)`
  position: absolute;
  top: 10px;
  right: 10px;
`;

const RoutesToggle = styled.label`
  position: absolute;
  left: 10px;
  bottom: 10px;
  display: flex;
  align-items: center;
  gap: 14px;
  height: 84px;
  padding: 1px 21px 0 20px;
  border: 2px solid ${color.border};
  border-radius: 8px;
  background: #ffffff;
  box-shadow: 0 2px 2px rgba(0, 0, 0, 0.05);
  cursor: pointer;
`;

const CheckBox = styled.input`
  appearance: none;
  width: 26px;
  height: 26px;
  margin: 0;
  border: 2px solid #767676;
  border-radius: 5px;
  background: #ffffff;
  &:checked { background: ${color.link}; }
`;

const Attribution = styled.div`
  position: absolute;
  right: 0;
  bottom: 0;
  padding: 0 10px;
  background: rgba(255, 255, 255, 0.7);
  font-size: 22px;
  line-height: 30px;
  white-space: nowrap;
`;

const MapLink = styled.a`
  color: #2d77a4;
  text-decoration: none;
`;

const Validity = styled.section`
  display: flex;
  justify-content: space-between;
  align-items: flex-start;
  height: 170px;
  padding: 24px 30px 0;
  border-bottom: 2px solid ${color.border};
`;

const ValidityInfo = styled.div`
  display: flex;
  flex-direction: column;
  gap: 13px;
  padding: 16px 0 0 5px;
`;

const SectionTitle = styled.h2`
  display: flex;
  align-items: center;
  gap: 15px;
  margin: 0;
  font-size: 36px;
  font-weight: 400;
  line-height: 40px;
`;

const DateRow = styled.div`
  display: flex;
  align-items: center;
  padding-left: 44px;
`;

const DateBar = styled.div`
  position: relative;
  width: 300px;
  height: 22px;
  margin: 0 10px;
  background: #808080;
`;

const Today = styled.span`
  position: absolute;
  top: -10px;
  width: 9px;
  height: 42px;
  border: 2px solid #bb9429;
  background: #efcd42;
`;

const Badge = styled.span`
  height: 34px;
  margin: 4px 0 0 9px;
  padding: 0 12px;
  border-radius: 7px;
  background: ${color.success};
  color: #ffffff;
  font-size: 21px;
  font-weight: 700;
  line-height: 34px;
`;

const Actions = styled.div`
  display: flex;
  flex: none;
  gap: 10px;
`;

const ActionButton = styled.button<{ $success?: boolean }>`
  ${buttonBase}
  gap: 8px;
  height: 68px;
  padding: 1px 24px 0;
  border-radius: 8px;
  font-size: 28px;
  line-height: 40px;
  ${(p) => p.$success && css`
    border-color: #9dca94;
    background: #a5cf9c;
    color: #ffffff;
    cursor: not-allowed;
  `}
`;

const Tabs = styled.nav`
  display: flex;
  gap: 4px;
  padding: 20px 30px;
`;

const Tab = styled.a<{ $active?: boolean }>`
  padding: 21px 30px 19px;
  border-radius: 8px;
  background: ${(p) => (p.$active ? color.link : 'transparent')};
  color: ${(p) => (p.$active ? '#ffffff' : color.link)};
  text-decoration: none;
`;

const tabs = ['Summary', 'Routes', 'Patterns', 'Stops', 'Timetables'];
const elapsed = 0.366;

export default function App() {
  const [size, setSize] = useState('Slim');
  const [tab, setTab] = useState('Summary');
  return (
    <>
      <GlobalStyle />
      <Panel>
        <Header>
          <Titles>
            <TitleRow>
              <IconSlot $width={46} $tone={color.warning}><Icon name="warning" size={36} /></IconSlot>
              <Heading>11/20/2021 16:00 Version</Heading>
              <EditButton type="button" aria-label="Edit version name"><Icon name="pencil" size={30} /></EditButton>
            </TitleRow>
            <Byline>
              <Icon name="cloud" size={28} width={30} />
              <Icon name="wrench" size={28} />
              <BylineText>Version published 2 months ago by <strong>system</strong></BylineText>
            </Byline>
          </Titles>
          <ButtonGroup>
            <GroupButton type="button"><DownloadIcon />Download version</GroupButton>
            <GroupButton type="button">
              <IconSlot $width={31}><Icon name="archive" size={24} /></IconSlot>
              Export (.shp)
              <Caret $gap={-2} />
            </GroupButton>
            <GroupButton type="button"><SolidPencilIcon />Load version</GroupButton>
            <GroupButton type="button" $tone={color.danger}>
              <IconSlot $width={30}><Icon name="trash" size={24} /></IconSlot>
              Delete version
            </GroupButton>
          </ButtonGroup>
        </Header>
        <MapFrame>
          <BayAreaMap />
          <ZoomControl>
            <ZoomButton type="button" aria-label="Zoom in">+</ZoomButton>
            <ZoomButton type="button" aria-label="Zoom out">−</ZoomButton>
          </ZoomControl>
          <SizeToggle>
            {['Slim', 'Large'].map((s) => (
              <GroupButton key={s} type="button" $active={size === s} onClick={() => setSize(s)}>{s}</GroupButton>
            ))}
          </SizeToggle>
          <RoutesToggle>
            <CheckBox type="checkbox" />
            Show all routes
          </RoutesToggle>
          <Attribution>
            <MapLink href="#leaflet">Leaflet</MapLink> | <MapLink href="#mapbox">© Mapbox</MapLink>{' '}
            <MapLink href="#osm">© OpenStreetMap</MapLink> <MapLink href="#improve">Improve this map</MapLink>
          </Attribution>
        </MapFrame>
        <Validity>
          <ValidityInfo>
            <SectionTitle><Icon name="calendar" size={36} />Feed validity dates</SectionTitle>
            <DateRow>
              Dec 5, 2021
              <DateBar><Today style={{ left: `${elapsed * 100}%` }} /></DateBar>
              Mar 5, 2022
              <Badge>active</Badge>
            </DateRow>
          </ValidityInfo>
          <Actions>
            <ActionButton type="button">
              <IconSlot $width={36}><Icon name="fork" size={28} /></IconSlot>
              Merge with version
              <Caret $gap={1} />
            </ActionButton>
            <ActionButton type="button" $success disabled>
              <IconSlot $width={35}><Icon name="check" size={28} /></IconSlot>
              Published
            </ActionButton>
          </Actions>
        </Validity>
        <Tabs>
          {tabs.map((t) => (
            <Tab key={t} href={`#${t.toLowerCase()}`} $active={tab === t} onClick={() => setTab(t)}>{t}</Tab>
          ))}
        </Tabs>
      </Panel>
    </>
  );
}
